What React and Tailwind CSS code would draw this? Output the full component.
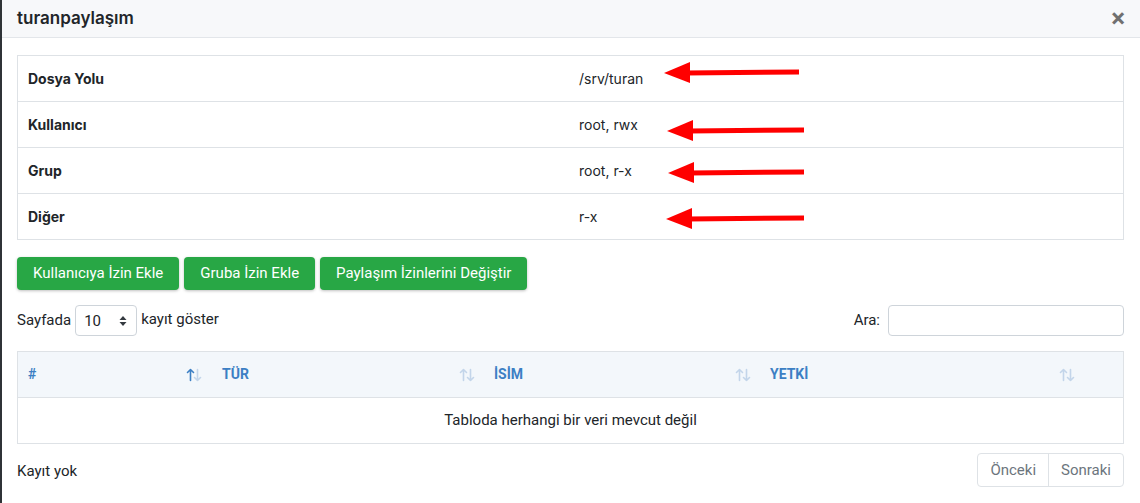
import React from "react";

function SortIcon({ active }) {
  const up = active ? "#3c7fc4" : "#c3d5ea";
  const down = "#c3d5ea";
  return (
    <svg width="16" height="14" viewBox="0 0 16 14" fill="none" strokeWidth="1.6" strokeLinecap="round" strokeLinejoin="round">
      <path d="M4.5 12.5V1.5M1.5 4.5l3-3 3 3" stroke={up} />
      <path d="M11.5 1.5v11M8.5 9.5l3 3 3-3" stroke={down} />
    </svg>
  );
}

function Arrow({ top, tip, end }) {
  return (
    <svg
      className="absolute"
      style={{ top: top - 12, left: tip }}
      width={end - tip}
      height="24"
      viewBox={`0 0 ${end - tip} 24`}
    >
      <path d={`M22 12 L${end - tip - 1} 11`} stroke="#ff0000" strokeWidth="5" strokeLinecap="butt" />
      <polygon points="0,12 26,1 26,22" fill="#ff0000" />
    </svg>
  );
}

const rows = [
  ["Dosya Yolu", "/srv/turan"],
  ["Kullanıcı", "root, rwx"],
  ["Grup", "root, r-x"],
  ["Diğer", "r-x"],
];

export default function App() {
  return (
    <div className="w-[1140px] h-[503px] overflow-hidden bg-white flex" style={{ fontFamily: "Roboto, sans-serif" }}>
      <div className="w-[2px] bg-[#2f3337] shrink-0" />
      <div className="flex-1 flex flex-col">
        <div className="h-[38px] bg-[#f7f8fa] border-b border-[#e3e6ea] flex items-center justify-between pl-[15px] pr-[15px]">
          <div className="text-[17px] font-semibold text-[#212529]" style={{ fontFamily: "Inter, sans-serif" }}>
            turanpaylaşım
          </div>
          <div className="text-[#707070] text-[26px] font-bold leading-none pb-[2px]">×</div>
        </div>

        <div className="pl-[15px] pr-[16px] pt-[17px] flex flex-col">
          <div className="relative border border-[#dee2e6]" style={{ fontFamily: "Inter, sans-serif" }}>
            {rows.map(([k, v], i) => (
              <div
                key={k}
                className={`grid grid-cols-[552px_1fr] items-center text-[14px] text-[#212529] ${i > 0 ? "border-t border-[#dee2e6] h-[46px]" : "h-[45px]"}`}
              >
                <div className="pl-[10px] font-bold">{k}</div>
                <div className="pl-[9px]">{v}</div>
              </div>
            ))}
            <Arrow top={17} tip={646} end={782} />
            <Arrow top={75} tip={649} end={787} />
            <Arrow top={117} tip={650} end={787} />
            <Arrow top={163} tip={648} end={787} />
          </div>

          <div className="flex gap-[5px] mt-[17px]">
            {["Kullanıcıya İzin Ekle", "Gruba İzin Ekle", "Paylaşım İzinlerini Değiştir"].map((t) => (
              <button
                key={t}
                className="h-[33px] px-[16px] rounded-[4px] bg-[#28a745] text-white text-[15px] shadow-[0_1px_3px_rgba(0,0,0,0.25)]"
              >
                {t}
              </button>
            ))}
          </div>

          <div className="flex items-center justify-between mt-[15px] text-[15px] text-[#212529]">
            <div className="flex items-center gap-[4px]">
              <span>Sayfada</span>
              <div className="w-[62px] h-[31px] border border-[#ced4da] rounded-[4px] flex items-center justify-between pl-[8px] pr-[9px]">
                <span className="pt-[2px]">10</span>
                <svg width="8" height="12" viewBox="0 0 8 12">
                  <path d="M4 1L7.5 5H0.5Z M4 11L7.5 7H0.5Z" fill="#343a40" />
                </svg>
              </div>
              <span className="-mt-[2px]">kayıt göster</span>
            </div>
            <div className="flex items-center gap-[8px]">
              <span>Ara:</span>
              <div className="w-[236px] h-[31px] border border-[#ced4da] rounded-[4px]" />
            </div>
          </div>

          <div className="mt-[15px] border border-[#dee2e6]">
            <div className="grid grid-cols-[190px_274px_276px_1fr] h-[46px] bg-[#f3f7fb] border-b border-[#dee2e6] items-center text-[14px] font-bold text-[#3c7fc4]">
              <div className="flex items-center justify-between pl-[10px] pr-[6px]">
                <span>#</span>
                <SortIcon active />
              </div>
              <div className="flex items-center justify-between pl-[14px] pr-[7px]">
                <span>TÜR</span>
                <SortIcon />
              </div>
              <div className="flex items-center justify-between pl-[12px] pr-[7px]">
                <span>İSİM</span>
                <SortIcon />
              </div>
              <div className="flex items-center justify-between pl-[12px] pr-[48px]">
                <span>YETKİ</span>
                <SortIcon />
              </div>
            </div>
            <div className="h-[45px] flex items-center justify-center text-[15px] text-[#212529]">
              Tabloda herhangi bir veri mevcut değil
            </div>
          </div>

          <div className="flex items-center justify-between mt-[9px]">
            <span className="text-[15px] text-[#212529] mt-[2px]">Kayıt yok</span>
            <div className="flex h-[34px] border border-[#dee2e6] rounded-[4px] text-[15px] text-[#6c757d]">
              <div className="px-[12px] flex items-center border-r border-[#dee2e6]">Önceki</div>
              <div className="px-[12px] flex items-center">Sonraki</div>
            </div>
          </div>
        </div>
      </div>
    </div>
  );
}
